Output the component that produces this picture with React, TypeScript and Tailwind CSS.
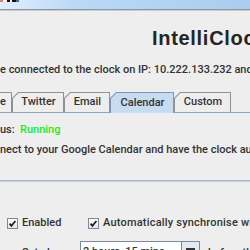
import React from "react";

const font = "font-['Roboto','Liberation_Sans',sans-serif]";

function Tab({
  label,
  className,
  selected,
}: {
  label: string;
  className: string;
  selected?: boolean;
}) {
  return (
    <div
      className={`${className} shrink-0 px-px pt-px [clip-path:polygon(6px_0,100%_0,100%_100%,0_100%,0_6px)] ${
        selected ? "relative z-10 -mb-px h-[21px] bg-[#7f97ba]" : "h-[20px] bg-[#8f9195]"
      }`}
    >
      <div
        className={`flex h-full items-center justify-center pl-px text-[11px] font-medium text-[#333] [clip-path:polygon(5.5px_0,100%_0,100%_100%,0_100%,0_5.5px)] ${
          selected ? "bg-[#c7dbf1]" : "bg-[#eeeeee]"
        }`}
      >
        {label}
      </div>
    </div>
  );
}

function Check() {
  return (
    <svg width="11" height="11" viewBox="0 0 11 11" className="shrink-0">
      <defs>
        <linearGradient id="cb" x1="0" y1="0" x2="0" y2="1">
          <stop offset="0" stopColor="#ffffff" />
          <stop offset="1" stopColor="#dfe6ee" />
        </linearGradient>
      </defs>
      <rect x="0.5" y="0.5" width="10" height="10" fill="url(#cb)" stroke="#7d8a9a" />
      <path d="M2.6 5.6 L4.4 7.8 L8.4 3" fill="none" stroke="#1c1c1c" strokeWidth="1.7" />
    </svg>
  );
}

export default function App() {
  return (
    <div className={`h-[250px] w-[250px] overflow-hidden bg-[#eeeeee] ${font}`}>
      <div className="h-[9px] bg-linear-to-r from-[#e2effc] via-[#bad9f7] via-30% to-[#aacdef]">
        <div className="flex h-[2px] w-[19px]">
          <div className="w-[3px] bg-[#c98a7a]" />
          <div className="w-[4px] bg-[#f4f4f4]" />
          <div className="w-[3px] bg-[#111]" />
          <div className="w-[2px] bg-[#e8e8e8]" />
          <div className="w-[4px] bg-[#111]" />
          <div className="w-[3px] bg-[#3c6ea0]" />
        </div>
      </div>
      <div className="h-px bg-[#8f969d]" />
      <div className="h-px bg-[#c9cdd2]" />

      <div className="mt-[15px] whitespace-nowrap pl-[152px] font-['Liberation_Sans',sans-serif] text-[20px] leading-[24px] font-bold tracking-[0.7px] text-[#252525]">
        IntelliClock
      </div>

      <div className="mt-[12px] whitespace-nowrap text-[11px] leading-[16px] font-medium text-[#333]">
        e connected to the clock on IP: 10.222.133.232 and
      </div>

      <div className="mt-[14px] flex items-end border-b border-[#8da4c4]">
        <div className="flex h-[20px] w-[12px] shrink-0 items-center justify-end border-t border-r border-[#8f9195] pr-[5px] text-[11px] font-medium text-[#333]">
          e
        </div>
        <Tab label="Twitter" className="w-[52px]" />
        <Tab label="Email" className="w-[46px]" />
        <Tab label="Calendar" className="w-[64px]" selected />
        <Tab label="Custom" className="w-[57px]" />
      </div>

      <div className="mt-[9px] flex whitespace-nowrap text-[11px] leading-[16px] font-medium">
        <span className="w-[20px] shrink-0 text-[#333]">us:</span>
        <span className="shrink-0 text-[#19ec19]">Running</span>
      </div>
      <div className="mt-[4px] whitespace-nowrap text-[11px] leading-[16px] font-medium text-[#333]">
        nect to your Google Calendar and have the clock automatically
      </div>

      <div className="mt-[22px] h-px bg-[#a9b8d0]" />
      <div className="h-px bg-[#c3cde0]" />

      <div className="mt-[33px] flex items-center whitespace-nowrap pl-[7px] text-[11px] leading-[16px] font-medium text-[#333]">
        <Check />
        <span className="ml-[4px] w-[66px] shrink-0">Enabled</span>
        <Check />
        <span className="ml-[4px] shrink-0 tracking-[0.2px]">Automatically synchronise with calendar</span>
      </div>

      <div className="mt-[10px] flex whitespace-nowrap text-[11px] font-medium text-[#333]">
        <span className="w-[80px] shrink-0 pt-[4px] pl-[22px]">Set alarm</span>
        <div className="flex h-[20px] w-[120px] shrink-0 border border-[#7d8a9a] bg-white">
          <span className="flex-1 pt-[2px] pl-[2px]">2 hours, 15 mins</span>
          <div className="flex w-[18px] shrink-0 justify-center border-l border-[#7d8a9a] bg-[#e3e9f0] pt-[6px]">
            <div className="h-[2px] w-[9px] bg-[#333]" />
          </div>
        </div>
        <span className="shrink-0 pt-[4px] pl-[8px]">before the event</span>
      </div>
    </div>
  );
}
